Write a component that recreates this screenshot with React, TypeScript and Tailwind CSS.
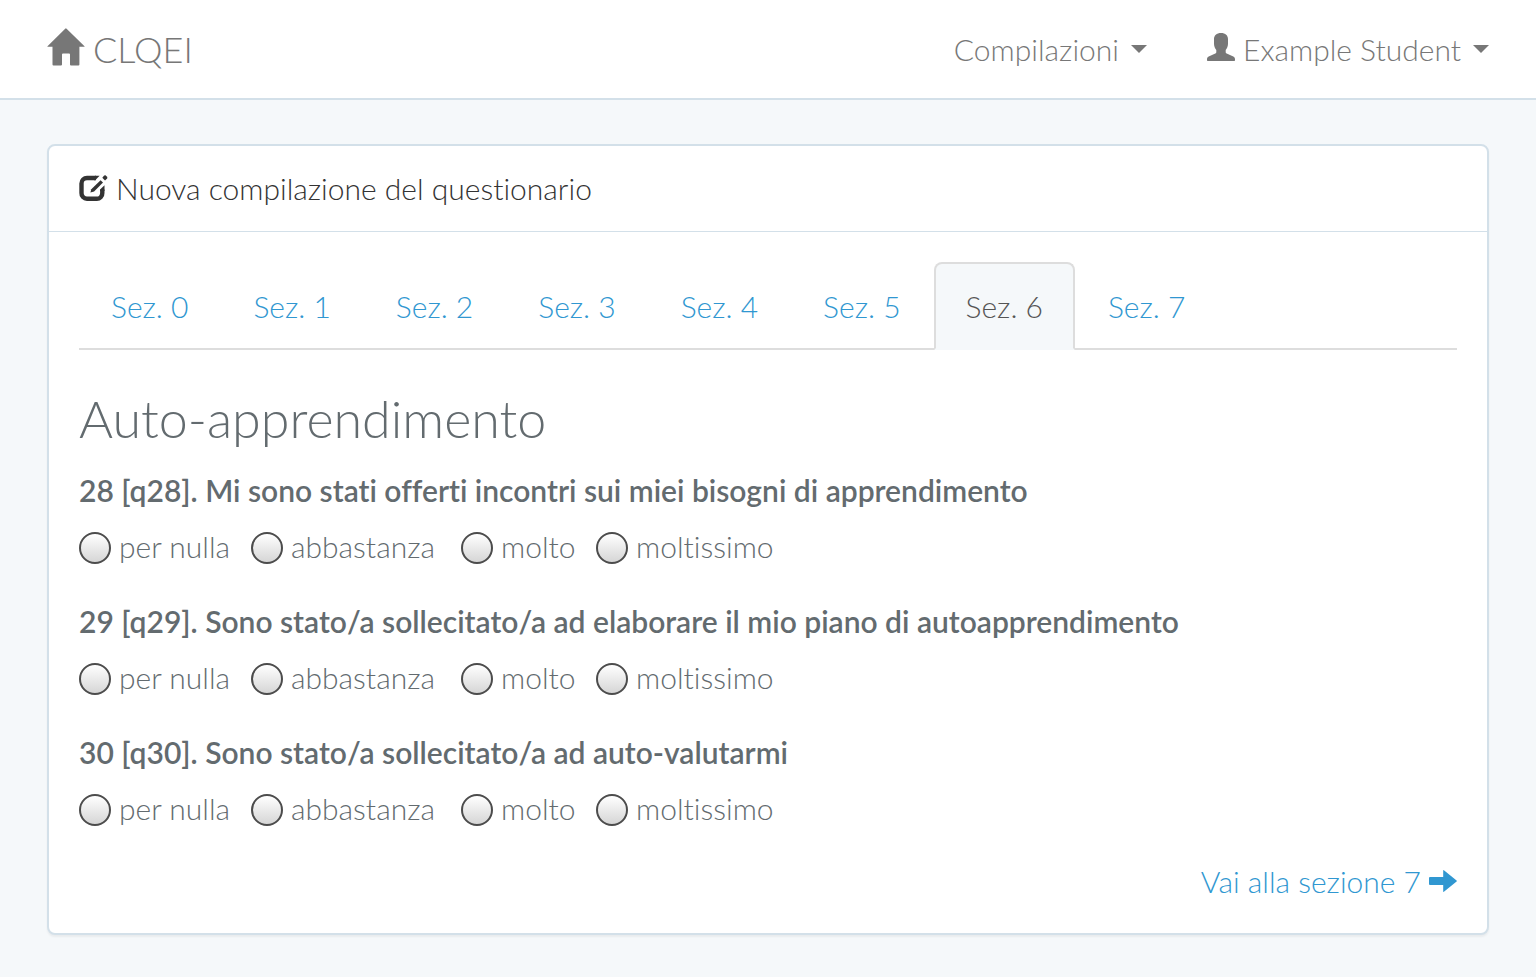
import React from "react";

const sections = [0, 1, 2, 3, 4, 5, 6, 7];
const activeSection = 6;

const questions = [
  { id: "q28", text: "28 [q28]. Mi sono stati offerti incontri sui miei bisogni di apprendimento" },
  { id: "q29", text: "29 [q29]. Sono stato/a sollecitato/a ad elaborare il mio piano di autoapprendimento" },
  { id: "q30", text: "30 [q30]. Sono stato/a sollecitato/a ad auto-valutarmi" },
];

const answers = ["per nulla", "abbastanza", "molto", "moltissimo"];

function HomeIcon() {
  return (
    <svg viewBox="0 0 38 38" className="mb-1 h-[38px] w-[38px]" fill="currentColor" aria-hidden="true">
      <path d="M18.2.7a1 1 0 0 1 1.4 0L37.5 18.2q.4.6-.3.6H32.4V36.5q0 1-1 1H24q-1 0-1-1V26.500q0-1-1-1H16q-1 0-1 1V36.500q0 1-1 1H6.500q-1 0-1-1V18.800H.8q-.7 0-.3-.6Z" />
    </svg>
  );
}

function UserIcon() {
  return (
    <svg viewBox="0 0 28 28" className="mb-1 h-7 w-7" fill="currentColor" aria-hidden="true">
      <path d="M14 0c4.500 0 7 2.500 7 6.200v4.500c0 2.600-1 4.600-2.300 6.200v2.200c0 .8.300 1.100 1 1.400l6.600 3.100c1.100.5 1.600 1.300 1.700 2.400v1c0 .7-.3 1-1 1H1c-.7 0-1-.3-1-1v-1c.1-1.100.6-1.900 1.700-2.400l6.600-3.100c.7-.3 1-.6 1-1.400v-2.200C8 15.300 7 13.300 7 10.700V6.200C7 2.500 9.500 0 14 0Z" />
    </svg>
  );
}

function EditIcon() {
  return (
    <svg viewBox="0 0 29 27" className="h-[27px] w-[29px]" aria-hidden="true">
      <path
        d="M17 3H8a5.500 5.500 0 0 0-5.500 5.500V18A5.500 5.500 0 0 0 8 23.800h9.500A5.500 5.500 0 0 0 23.300 18v-3.500"
        fill="none"
        stroke="currentColor"
        strokeWidth="4.400"
      />
      <path d="M16 .8h4.600L16.200 5.200H15Z" fill="currentColor" />
      <path d="M25.500 10.200 21.100 14.600V16h4.400Z" fill="currentColor" />
      <path d="m21.600 5.200 2.400 2.400-8.900 9-3.700.8.9-3.200Z" fill="currentColor" />
      <path d="m25.200.600 1.300-.3 1.800 1.800-.1 1.300-2.200 2.100L23.300 2.800Z" fill="currentColor" />
    </svg>
  );
}

function ArrowIcon() {
  return (
    <svg viewBox="0 0 28 22" className="h-[22px] w-7" fill="currentColor" aria-hidden="true">
      <path d="M14.200.5q0-.8.700-.2L27.600 10.500q.5.500 0 1L14.900 21.700q-.7.600-.7-.2V15H1q-1 0-1-1V8q0-1 1-1H14.200Z" />
    </svg>
  );
}

function Caret() {
  return (
    <svg viewBox="0 0 16 8" className="h-2 w-4" fill="currentColor" aria-hidden="true">
      <path d="M0 0h16L8 8Z" />
    </svg>
  );
}

export default function App() {
  return (
    <div className="min-h-screen bg-[#f5f8fa] font-['Lato',sans-serif] text-[30px] leading-10 font-light text-[#636b6f] [font-variant-ligatures:no-common-ligatures]">
      <nav className="flex items-center justify-between border-b-2 border-[#d3e0e9] bg-white px-[47px] pt-7 pb-7 text-[#777]">
        <a href="#home" className="flex items-center gap-2 text-4xl leading-10">
          <HomeIcon />
          <span>CLQEI</span>
        </a>
        <div className="flex items-center gap-[60px]">
          <button type="button" className="flex items-center gap-3">
            Compilazioni
            <Caret />
          </button>
          <button type="button" className="flex items-center gap-3">
            <span className="flex items-center gap-2">
              <UserIcon />
              Example Student
            </span>
            <Caret />
          </button>
        </div>
      </nav>

      <main className="px-[47px] pt-11 pb-10">
        <section className="rounded-lg border-2 border-[#d3e0e9] bg-white shadow-[0_2px_2px_rgba(0,0,0,0.05)]">
          <h1 className="flex items-center gap-2 border-b border-[#d3e0e9] px-[30px] pt-[22px] pb-[23px] text-[#333]">
            <EditIcon />
            Nuova compilazione del questionario
          </h1>
          <div className="px-[30px] pt-[30px] pb-8">
            <ul className="flex gap-px border-b-2 border-[#ddd]">
              {sections.map((n) => (
                <li key={n} className="-mb-0.5">
                  <a
                    href={`#sez-${n}`}
                    className={
                      n === activeSection
                        ? "block rounded-t-lg border-2 border-[#ddd] border-b-[#f5f8fa] bg-[#f5f8fa] px-[30px] py-[22px] text-[#555]"
                        : "block border-2 border-transparent px-[30px] py-[22px] text-[#3097d1]"
                    }
                  >
                    Sez. {n}
                  </a>
                </li>
              ))}
            </ul>

            <h2 className="mt-[38px] mb-[22px] text-[52px] leading-[60px]">Auto-apprendimento</h2>

            <form className="flex flex-col gap-[35px]">
              {questions.map((q) => (
                <fieldset key={q.id}>
                  <legend className="font-semibold">{q.text}</legend>
                  <div className="mt-4 grid grid-cols-[172px_210px_135px_auto] justify-start">
                    {answers.map((a) => (
                      <label key={a} className="flex items-center gap-2">
                        <input
                          type="radio"
                          name={q.id}
                          value={a}
                          className="mt-1 h-8 w-8 appearance-none rounded-full border-2 border-[#4c4c4c] bg-linear-to-b from-white to-[#d6d6d6] checked:to-[#3097d1]"
                        />
                        {a}
                      </label>
                    ))}
                  </div>
                </fieldset>
              ))}
            </form>

            <div className="mt-[33px] flex justify-end">
              <a href="#sez-7" className="flex items-center gap-2 text-[#3097d1]">
                Vai alla sezione 7
                <ArrowIcon />
              </a>
            </div>
          </div>
        </section>
      </main>
    </div>
  );
}
